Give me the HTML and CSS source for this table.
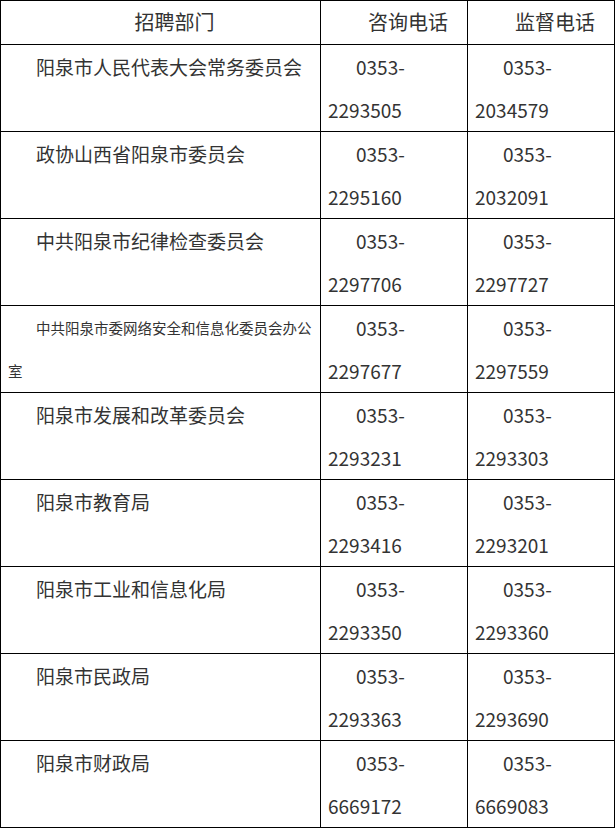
FILE: index.html
```html
<!DOCTYPE html>
<html lang="zh-CN">
<head>
<meta charset="utf-8">
<title>招聘部门</title>
<link rel="stylesheet" href="styles.css">
</head>
<body>
<table class="contacts">
  <colgroup>
    <col class="col-dept">
    <col class="col-phone">
    <col class="col-phone">
  </colgroup>
  <thead>
    <tr>
      <th>招聘部门</th>
      <th>咨询电话</th>
      <th>监督电话</th>
    </tr>
  </thead>
  <tbody>
    <tr>
      <td>阳泉市人民代表大会常务委员会</td>
      <td>0353-<br>2293505</td>
      <td>0353-<br>2034579</td>
    </tr>
    <tr>
      <td>政协山西省阳泉市委员会</td>
      <td>0353-<br>2295160</td>
      <td>0353-<br>2032091</td>
    </tr>
    <tr>
      <td>中共阳泉市纪律检查委员会</td>
      <td>0353-<br>2297706</td>
      <td>0353-<br>2297727</td>
    </tr>
    <tr>
      <td class="small">中共阳泉市委网络安全和信息化委员会办公室</td>
      <td>0353-<br>2297677</td>
      <td>0353-<br>2297559</td>
    </tr>
    <tr>
      <td>阳泉市发展和改革委员会</td>
      <td>0353-<br>2293231</td>
      <td>0353-<br>2293303</td>
    </tr>
    <tr>
      <td>阳泉市教育局</td>
      <td>0353-<br>2293416</td>
      <td>0353-<br>2293201</td>
    </tr>
    <tr>
      <td>阳泉市工业和信息化局</td>
      <td>0353-<br>2293350</td>
      <td>0353-<br>2293360</td>
    </tr>
    <tr>
      <td>阳泉市民政局</td>
      <td>0353-<br>2293363</td>
      <td>0353-<br>2293690</td>
    </tr>
    <tr>
      <td>阳泉市财政局</td>
      <td>0353-<br>6669172</td>
      <td>0353-<br>6669083</td>
    </tr>
  </tbody>
</table>
</body>
</html>
```
FILE: styles.css
```css
html, body {
  margin: 0;
  padding: 0;
  background: #fff;
}

body {
  font-family: "Noto Sans CJK SC", "Noto Sans", sans-serif;
  color: #333;
}

.contacts {
  border-collapse: collapse;
  table-layout: fixed;
  width: 614px;
}

.col-dept {
  width: 320px;
}

.col-phone {
  width: 147px;
}

.contacts th,
.contacts td {
  border: 1px solid #000;
  padding: 0 7px;
  text-indent: 28px;
  line-height: 43px;
  vertical-align: top;
  text-align: left;
  font-size: 19px;
  font-weight: normal;
}

.contacts th {
  text-align: center;
  font-size: 20px;
  line-height: 42px;
}

.contacts thead tr {
  height: 44px;
}

.contacts td.small {
  font-size: 14.5px;
}

.contacts tbody tr {
  height: 87px;
}
```
